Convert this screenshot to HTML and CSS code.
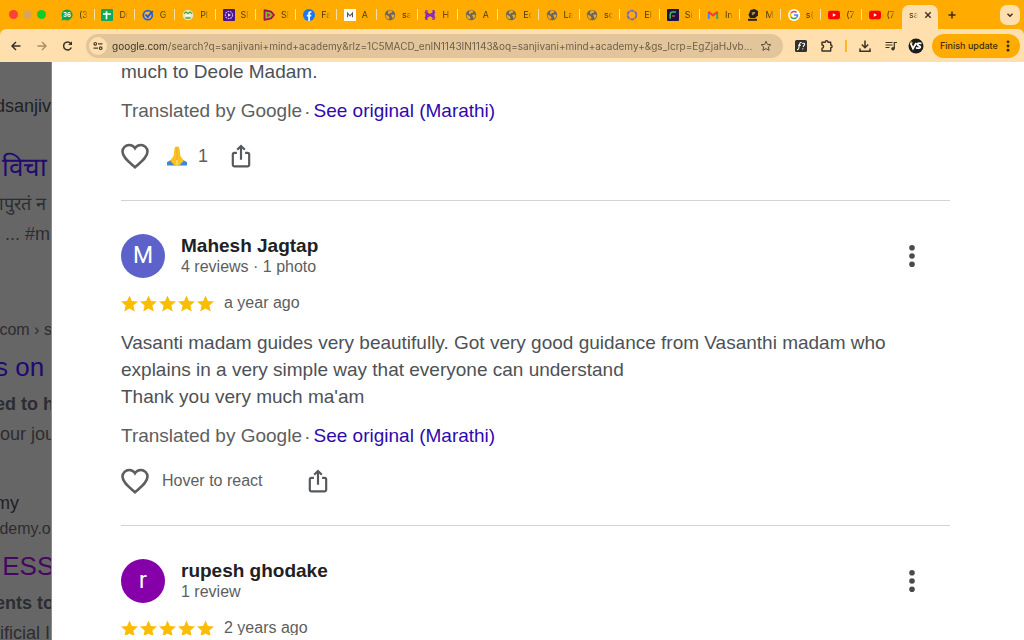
FILE: index.html
```
<!DOCTYPE html>
<html lang="en">

<head>
    <meta charset="UTF-8">
    <meta name="viewport" content="width=device-width, initial-scale=1.0">
    <title>sanjivani mind academy - Google Search</title>
    <link rel="stylesheet" href="styles.css">
</head>

<body>

    <!-- Shared icons -->
    <svg class="sprite" aria-hidden="true">
        <symbol id="globe" viewBox="0 0 12 12">
            <circle cx="6" cy="6" r="5.200" fill="#67675f" />
            <path d="M1.500 5.500l3 1.400.8 1.300v2.200C3 10.200 1.200 8.400 1.500 5.500zM4.500 1.600l2.300-.4 1.800 1-1 1.500-1.700.3-.5 1.300-1.600-.7zM7 5.800l2.600-.3.9.8c-.1 1.500-1 2.600-2.100 3.300L7.800 7.600z" fill="#f0a420" />
        </symbol>
        <symbol id="youtube" viewBox="0 0 12 12">
            <rect x="0" y="1.800" width="12" height="8.400" rx="2.200" fill="#f00" />
            <path d="M4.800 4.200v3.600L8 6z" fill="#fff" />
        </symbol>
        <symbol id="star" viewBox="2 1.500 20 20">
            <path d="M12 17.270L18.180 21l-1.640-7.030L22 9.240l-7.190-.61L12 2 9.190 8.630 2 9.240l5.460 4.730L5.820 21z" fill="#fbbc04" />
        </symbol>
        <symbol id="heart" viewBox="0 0 28 28">
            <path d="M14 25.300C8 20 1.500 15.500 1.500 9.500A6.700 6.700 0 0 1 8.200 3C10.600 3 12.800 4.200 14 6.200 15.200 4.200 17.400 3 19.800 3a6.700 6.700 0 0 1 6.700 6.500C26.500 15.500 20 20 14 25.300z" fill="none" stroke="#5e5e5e" stroke-width="2.600" />
        </symbol>
        <symbol id="share" viewBox="0 0 22 28">
            <path d="M6.500 10.500H3.800A1.800 1.800 0 0 0 2 12.300v11.400a1.800 1.800 0 0 0 1.800 1.800h14.400a1.800 1.800 0 0 0 1.800-1.800V12.300a1.800 1.800 0 0 0-1.800-1.800h-2.700M11 18V4M6.800 7.200L11 3l4.200 4.200" fill="none" stroke="#55595e" stroke-width="2.400" />
        </symbol>
        <symbol id="more" viewBox="0 0 24 24">
            <circle cx="12" cy="3.700" r="2.800" />
            <circle cx="12" cy="12" r="2.800" />
            <circle cx="12" cy="20.300" r="2.800" />
        </symbol>
    </svg>

    <header>
        <div class="tab-strip">
            <div class="window-controls">
                <span class="close"></span>
                <span class="minimize"></span>
                <span class="maximize"></span>
            </div>
            <div class="tabs">
                <button class="tab">
                    <svg viewBox="0 0 12 12"><path d="M6 .5a5.500 5.500 0 1 1-2.600 10.300L.5 11.500l.8-2.800A5.500 5.500 0 0 1 6 .5z" fill="#09a551" /><text x="6" y="8.200" font-size="6" font-weight="bold" fill="#fff" text-anchor="middle">36</text></svg>
                    <span>(3</span>
                </button>
                <button class="tab">
                    <svg viewBox="0 0 12 12"><rect width="12" height="12" rx="1" fill="#0fa958" /><path d="M2 5h8M5.500 2.200v8" stroke="#fff" stroke-width="1.600" /></svg>
                    <span>Di</span>
                </button>
                <button class="tab">
                    <svg viewBox="0 0 12 12"><circle cx="5.800" cy="6.200" r="4.500" fill="#fbb03b" stroke="#2563d9" stroke-width="1.800" /><path d="M3.500 5.500l2.200 2.300 5-5.800" fill="none" stroke="#1d56c5" stroke-width="1.800" /></svg>
                    <span>G</span>
                </button>
                <button class="tab">
                    <svg viewBox="0 0 12 12"><circle cx="6" cy="6" r="5.300" fill="#dfe9c9" /><path d="M2 4.500l2-1.500 2 1.500 2-1.500 2 1.500M3.500 9h5" fill="none" stroke="#54a33c" stroke-width="1.300" /><path d="M3.500 6.500h5" stroke="#fff" stroke-width="1.500" /></svg>
                    <span>Pl</span>
                </button>
                <button class="tab">
                    <svg viewBox="0 0 12 12"><rect width="12" height="12" rx="1" fill="#4a148c" /><circle cx="6" cy="6" r="3.600" fill="none" stroke="#c8a2f0" stroke-width="1.200" stroke-dasharray="1.800 .7" /><path d="M5 4.200v3.600L8 6z" fill="#e7d3ff" /></svg>
                    <span>Sl</span>
                </button>
                <button class="tab">
                    <svg viewBox="0 0 12 12"><path d="M1.500 1.200l6.500 1.500 3 3.300-3 3.300-6.500 1.500z" fill="#7fc321" stroke="#a01258" stroke-width="1.800" stroke-linejoin="round" /><path d="M4 3.800v4.400L8 6z" fill="#e9138b" /></svg>
                    <span>Sl</span>
                </button>
                <button class="tab">
                    <svg viewBox="0 0 12 12"><circle cx="6" cy="6" r="6" fill="#1877f2" /><path d="M5.200 12V7.500H3.800V5.700h1.400V4.500c0-1.500.8-2.300 2.200-2.300h1v1.600h-.7c-.6 0-.8.300-.8.800v1.100h1.500l-.3 1.800H6.900V12z" fill="#fff" /></svg>
                    <span>Fa</span>
                </button>
                <button class="tab">
                    <svg viewBox="0 0 12 12"><rect width="12" height="12" fill="#fff" /><path d="M3.500 8.300V4L6 7l2.500-3v4.300" fill="none" stroke="#555" stroke-width="1.100" /></svg>
                    <span>A</span>
                </button>
                <button class="tab"><svg><use href="#globe" /></svg><span>sa</span></button>
                <button class="tab">
                    <svg viewBox="0 0 12 12"><path d="M2.500 1v10M9.500 1v10M1 3l10 6M1 9l10-6" stroke="#7a28c9" stroke-width="2" /><path d="M1.500 1.500l2 2M8.500 8.500l2 2" stroke="#e63f6c" stroke-width="1.500" /></svg>
                    <span>H</span>
                </button>
                <button class="tab"><svg><use href="#globe" /></svg><span>A</span></button>
                <button class="tab"><svg><use href="#globe" /></svg><span>Ec</span></button>
                <button class="tab"><svg><use href="#globe" /></svg><span>La</span></button>
                <button class="tab"><svg><use href="#globe" /></svg><span>sc</span></button>
                <button class="tab">
                    <svg viewBox="0 0 12 12"><circle cx="6" cy="6" r="4.400" fill="none" stroke="#7566c9" stroke-width="1.900" stroke-dasharray="3.800 .8" /></svg>
                    <span>El</span>
                </button>
                <button class="tab">
                    <svg viewBox="0 0 12 12"><rect width="12" height="12" rx="1" fill="#1b1247" /><path d="M3.200 9.800V5.500c0-1.500 1-2.500 2.500-2.500H9" fill="none" stroke="#44b85c" stroke-width="1.500" /><path d="M5 7h3" stroke="#e35c3f" stroke-width="1.200" /></svg>
                    <span>Si</span>
                </button>
                <button class="tab">
                    <svg viewBox="0 0 12 12"><path d="M1.800 10V3" stroke="#4285f4" stroke-width="2" /><path d="M10.200 10V3" stroke="#34a853" stroke-width="2" /><path d="M1.400 2.800L6 6.400l4.600-3.600" fill="none" stroke="#ea4335" stroke-width="2.200" /></svg>
                    <span>In</span>
                </button>
                <button class="tab">
                    <svg viewBox="0 0 12 12"><path d="M3.500 1l4-1 3.500 2v4.500L8 9H3L1.500 6z" fill="#222" /><path d="M4.500 3.500l3-.7 1 1.200-3 2.500z" fill="#b58b52" /><path d="M1 10.800h9" stroke="#222" stroke-width="2" /></svg>
                    <span>M</span>
                </button>
                <button class="tab">
                    <svg viewBox="0 0 12 12"><circle cx="6" cy="6" r="6" fill="#fff" /><path d="M8.500 3.500A3.500 3.500 0 0 0 3 4.200" fill="none" stroke="#ea4335" stroke-width="1.600" /><path d="M3 4.200a3.500 3.500 0 0 0 0 3.600" fill="none" stroke="#fbbc04" stroke-width="1.600" /><path d="M3 7.800a3.500 3.500 0 0 0 5.500.7" fill="none" stroke="#34a853" stroke-width="1.600" /><path d="M6 6h3.500a3.500 3.500 0 0 1-1 2.500" fill="none" stroke="#4285f4" stroke-width="1.600" /></svg>
                    <span>s(</span>
                </button>
                <button class="tab"><svg><use href="#youtube" /></svg><span>(7</span></button>
                <button class="tab"><svg><use href="#youtube" /></svg><span>(7</span></button>
            </div>
            <button class="tab active">
                <span>sa</span>
                <svg viewBox="0 0 8 8"><path d="M1.300 1.300l5.400 5.400M6.700 1.300L1.300 6.700" stroke="#3c3225" stroke-width="1.400" /></svg>
            </button>
            <div class="strip-end">
                <button class="new-tab" aria-label="New tab">
                    <svg width="8" height="8" viewBox="0 0 8 8"><path d="M4 .5v7M.5 4h7" stroke="#3c2d0c" stroke-width="1.500" /></svg>
                </button>
                <button class="tab-search" aria-label="Search tabs">
                    <svg width="8" height="8" viewBox="0 0 8 8"><path d="M1.500 2.700L4 5.200l2.500-2.500" fill="none" stroke="#3c3225" stroke-width="1.500" /></svg>
                </button>
            </div>
        </div>

        <div class="toolbar">
            <div class="history">
                <button aria-label="Back"><svg width="12" height="12" viewBox="0 0 12 12"><path d="M10.500 6h-8M6 2L2 6l4 4" fill="none" stroke="#3c3225" stroke-width="1.500" /></svg></button>
                <button aria-label="Forward"><svg width="12" height="12" viewBox="0 0 12 12"><path d="M1.500 6h8M6 2l4 4-4 4" fill="none" stroke="#a98d67" stroke-width="1.400" /></svg></button>
                <button aria-label="Reload"><svg width="12" height="12" viewBox="0 0 12 12"><path d="M9.300 7.500A4 4 0 1 1 8.600 3.200" fill="none" stroke="#3c3225" stroke-width="1.500" /><path d="M10 1.200v3.900H6.100z" fill="#3c3225" /></svg></button>
            </div>
            <div class="address-bar">
                <button class="site-info" aria-label="View site information">
                    <svg width="10" height="10" viewBox="0 0 10 10" fill="none" stroke="#4a3f30" stroke-width="1.200"><circle cx="2.300" cy="2.800" r="1.300" /><path d="M5 2.800h4.500M.5 7.200H5" /><circle cx="7.700" cy="7.200" r="1.300" /></svg>
                </button>
                <input type="text" aria-label="Address" value="google.com/search?q=sanjivani+mind+academy&amp;rlz=1C5MACD_enIN1143IN1143&amp;oq=sanjivani+mind+academy+&amp;gs_lcrp=EgZjaHJvb...">
                <button aria-label="Bookmark this tab">
                    <svg width="12" height="12" viewBox="0 0 12 12"><path d="M6 1.200l1.400 3.200 3.500.3-2.600 2.300.8 3.400L6 8.600l-3.100 1.800.8-3.400-2.600-2.300 3.500-.3z" fill="none" stroke="#5c4f3d" /></svg>
                </button>
            </div>
            <div class="extensions">
                <button aria-label="Font finder">
                    <svg width="12" height="12" viewBox="0 0 12 12"><rect width="12" height="12" rx="1.500" fill="#33312d" /><path d="M2 9.500c1 .3 1.500-.2 1.800-1.500l.8-4c.3-1.300.9-1.700 2-1.400M3 5.200h3M7.200 3.500c2.600-1 3.300 1 1.300 2.500l-.4 1M7.900 8.300l-.2 1" fill="none" stroke="#fff" stroke-width="1.100" /></svg>
                </button>
                <button aria-label="Extensions">
                    <svg width="12" height="12" viewBox="0 0 12 12"><path d="M1 2.200h3.200a1.400 1.400 0 0 1 2.800 0h2.700V5a1.400 1.400 0 0 1 0 2.800V11H1V8.200a1.600 1.600 0 0 0 0-3.200z" fill="none" stroke="#3c3225" stroke-width="1.400" stroke-linejoin="round" /></svg>
                </button>
                <span class="divider"></span>
                <button aria-label="Downloads">
                    <svg width="12" height="12" viewBox="0 0 12 12"><path d="M6 .5v7M2.800 4.500L6 7.700l3.200-3.200M1 8.500v2.700h10V8.500" fill="none" stroke="#3c3225" stroke-width="1.500" /></svg>
                </button>
                <button aria-label="Media controls">
                    <svg width="12" height="12" viewBox="0 0 12 12"><path d="M.5 2.500h7M.5 5h7M.5 7.500h4M9.300 8.500V2.500H12" fill="none" stroke="#3c3225" stroke-width="1.200" /><circle cx="8" cy="8.700" r="1.700" fill="#3c3225" /></svg>
                </button>
                <button class="profile" aria-label="Profile">
                    <svg width="16" height="16" viewBox="0 0 16 16"><circle cx="8" cy="8" r="7.500" fill="#1c1c1c" /><path d="M2.500 3.500l2 2" stroke="#e0a51e" stroke-width="1.500" /><path d="M2.500 5l2.500 5.500L8.200 5M13.500 5.500c-4-1.300-5.500 1-2.500 2.300s.5 3-3 2" fill="none" stroke="#fff" stroke-width="1.800" /></svg>
                </button>
                <button class="update">Finish update
                    <svg width="12" height="12" viewBox="0 0 24 24" fill="#3c2d0c"><use href="#more" /></svg>
                </button>
            </div>
        </div>
    </header>

    <main>
        <!-- Search results, dimmed behind the reviews dialog -->
        <div class="results">
            <p class="site">dsanjiv</p>
            <h3 class="hindi"> विचा</h3>
            <p class="snippet cut">नापुरतं न</p>
            <p class="snippet">  ... #m</p>

            <p class="url first">.com › s</p>
            <h3>s on</h3>
            <p class="snippet"><b>ed to h</b></p>
            <p class="snippet"> our jou</p>

            <p class="site second">my</p>
            <p class="url"> demy.o</p>
            <h3 class="visited"> ESS</h3>
            <p class="snippet"><b>ents to</b></p>
            <p class="snippet">tificial I</p>
        </div>

        <section class="dialog">
            <div class="reviews">
                <article class="review">
                    <p class="text">much to Deole Madam.</p>
                    <p class="translated">Translated by Google<span class="dot"> · </span><a href="#">See original (Marathi)</a></p>
                    <div class="actions">
                        <button aria-label="React"><svg width="28" height="28"><use href="#heart" /></svg></button>
                        <button class="reaction">
                            <svg width="20" height="20" viewBox="0 0 20 20"><path d="M0 19.500v-3.300l4.500-2.700 5.500 6z" fill="#4285d6" /><path d="M20 19.500v-3.300l-4.500-2.700-5.500 6z" fill="#4285d6" /><path d="M9.700.5C8 .3 7.500 2 7.300 4L6.500 10l-3.300 4.700 4 4.300h2.500z" fill="#fdc21b" /><path d="M10.300.5c1.700-.2 2.200 1.500 2.400 3.500l.8 6 3.300 4.700-4 4.300h-2.500z" fill="#fdc21b" /><path d="M10 1v13" stroke="#e59a00" /></svg>
                            1
                        </button>
                        <button aria-label="Share"><svg width="20" height="26"><use href="#share" /></svg></button>
                    </div>
                </article>

                <article class="review">
                    <div class="author">
                        <span class="avatar blue">M</span>
                        <div class="author-info">
                            <h4>Mahesh Jagtap</h4>
                            <p>4 reviews · 1 photo</p>
                        </div>
                        <button class="menu" aria-label="More options"><svg width="24" height="24"><use href="#more" /></svg></button>
                    </div>
                    <div class="rating">
                        <span class="stars" role="img" aria-label="5 stars">
                            <svg><use href="#star" /></svg><svg><use href="#star" /></svg><svg><use href="#star" /></svg><svg><use href="#star" /></svg><svg><use href="#star" /></svg>
                        </span>
                        a year ago
                    </div>
                    <p class="text">Vasanti madam guides very beautifully. Got very good guidance from Vasanthi madam who explains in a very simple way that everyone can understand<br>Thank you very much ma'am</p>
                    <p class="translated">Translated by Google<span class="dot"> · </span><a href="#">See original (Marathi)</a></p>
                    <div class="actions">
                        <button class="react"><svg width="28" height="28"><use href="#heart" /></svg>Hover to react</button>
                        <button aria-label="Share"><svg width="20" height="26"><use href="#share" /></svg></button>
                    </div>
                </article>

                <article class="review">
                    <div class="author">
                        <span class="avatar purple">r</span>
                        <div class="author-info">
                            <h4>rupesh ghodake</h4>
                            <p>1 review</p>
                        </div>
                        <button class="menu" aria-label="More options"><svg width="24" height="24"><use href="#more" /></svg></button>
                    </div>
                    <div class="rating">
                        <span class="stars" role="img" aria-label="5 stars">
                            <svg><use href="#star" /></svg><svg><use href="#star" /></svg><svg><use href="#star" /></svg><svg><use href="#star" /></svg><svg><use href="#star" /></svg>
                        </span>
                        2 years ago
                    </div>
                </article>
            </div>
        </section>
    </main>

</body>

</html>
```
FILE: styles.css
```
* {
    box-sizing: border-box;
}

body {
    margin: 0;
    height: 100vh;
    display: flex;
    flex-direction: column;
    overflow: hidden;
    font-family: "Liberation Sans", Arial, sans-serif;
    background-color: #fff;
}

h3,
h4,
p {
    margin: 0;
}

button {
    display: flex;
    align-items: center;
    padding: 0;
    border: none;
    background: none;
    font-family: inherit;
    color: inherit;
    cursor: pointer;
}

svg {
    display: block;
    flex-shrink: 0;
}

.sprite {
    display: none;
}

/* Browser window */
header {
    flex-shrink: 0;
    font-family: Inter, sans-serif;
    background-color: #ffab00;
}

.tab-strip {
    display: flex;
    height: 29px;
}

.window-controls {
    display: flex;
    align-items: center;
    gap: 5px;
    width: 54px;
    padding-left: 9px;
}

.window-controls span {
    width: 9px;
    height: 9px;
    border-radius: 50%;
}

.close {
    background-color: #ff4136;
}

.minimize {
    background-color: #dca456;
}

.maximize {
    background-color: #12cc2c;
}

.tabs {
    display: flex;
    flex: 1;
    min-width: 0;
}

.tab {
    flex: 1;
    min-width: 0;
    gap: 6px;
    padding-left: 7px;
    font-size: 9px;
    color: #4f3a0c;
}

.tabs .tab::after {
    content: "";
    width: 1px;
    height: 11px;
    margin-left: auto;
    background-color: #ffe0a8;
}

.tabs .tab:last-child::after {
    background: none;
}

.tab svg {
    width: 12px;
    height: 12px;
}

.tab span {
    width: 9px;
    white-space: nowrap;
    text-align: left;
    -webkit-mask-image: linear-gradient(to right, #000 50%, transparent);
    mask-image: linear-gradient(to right, #000 50%, transparent);
}

.tab.active {
    flex: 0 0 36px;
    margin-top: 5px;
    padding-bottom: 5px;
    border-radius: 7px 7px 0 0;
    background-color: #ffdfae;
}

.tab.active svg {
    width: 8px;
    height: 8px;
}

.strip-end {
    display: flex;
    align-items: center;
    justify-content: space-between;
    width: 86px;
    padding: 0 4px 0 10px;
}

.tab-search {
    justify-content: center;
    width: 20px;
    height: 20px;
    border-radius: 7px;
    background-color: #ffdfae;
}

.toolbar {
    display: flex;
    align-items: center;
    gap: 10px;
    height: 33px;
    padding: 0 4px 0 10px;
    border-radius: 6px 6px 0 0;
    background-color: #ffdfae;
}

.history {
    display: flex;
    gap: 14px;
    width: 66px;
}

.address-bar {
    display: flex;
    align-items: center;
    flex: 1;
    min-width: 0;
    height: 24px;
    padding: 0 11px 0 3px;
    border-radius: 12px;
    background-color: #e3c59c;
}

.site-info {
    justify-content: center;
    width: 18px;
    height: 18px;
    border-radius: 50%;
    background-color: #ffdfae;
}

/* The domain reads darker than the rest of the address */
.address-bar input {
    flex: 1;
    min-width: 0;
    padding: 0 0 0 5px;
    border: none;
    outline: none;
    font-family: inherit;
    font-size: 10px;
    color: transparent;
    background: linear-gradient(to right, #3b3022 59px, #6a5a45 59px);
    -webkit-background-clip: text;
    background-clip: text;
}

.extensions {
    display: flex;
    align-items: center;
    gap: 14px;
    padding-left: 2px;
}

.divider {
    width: 2px;
    height: 12px;
    margin: 0 -2px;
    background-color: #ffb52a;
}

.profile {
    margin: 0 -6px 0 -3px;
}

.update {
    justify-content: space-between;
    width: 88px;
    height: 24px;
    padding: 0 6px 0 8px;
    border-radius: 12px;
    font-size: 9px;
    font-weight: 500;
    white-space: nowrap;
    color: #3c2d0c;
    background-color: #ffab00;
}

/* Page */
main {
    display: flex;
    flex: 1;
    min-height: 0;
}

.results {
    width: 52px;
    padding-top: 30px;
    overflow: hidden;
    color: #202124;
    background-color: #666;
    border-right: 1px solid #8a8a8a;
}

.results > * {
    margin-left: -5px;
    white-space: pre;
}

.results h3 {
    margin-top: 6px;
    margin-bottom: 3px;
    font-size: 26px;
    font-weight: normal;
    line-height: 38px;
    color: #1f0a70;
}

.results .hindi {
    margin-top: 28px;
}

.results .visited {
    color: #46085f;
}

.site {
    font-size: 18px;
    line-height: 28px;
}

.url {
    font-size: 16px;
    line-height: 24px;
    color: #2c2d30;
}

.snippet {
    font-size: 18px;
    line-height: 30px;
    color: #2c2d30;
}

.results .cut {
    margin-left: -11px;
}

.first {
    margin-top: 69px;
}

.second {
    margin-top: 40px;
}

/* Reviews dialog */
.dialog {
    flex: 1;
    min-width: 0;
    margin-bottom: 5px;
    padding: 0 74px 0 69px;
    overflow: hidden;
    color: #5e5e5e;
    background-color: #fff;
}

.reviews {
    margin-top: -4px;
}

.review {
    padding-bottom: 30px;
}

.review + .review {
    padding-top: 33px;
    border-top: 1px solid #d2d2d2;
}

.author {
    display: flex;
    align-items: center;
    margin-bottom: 13px;
}

.avatar {
    width: 44px;
    height: 44px;
    margin-right: 16px;
    border-radius: 50%;
    font-family: Roboto, sans-serif;
    font-size: 23px;
    line-height: 44px;
    text-align: center;
    color: #fff;
}

.blue {
    background-color: #5c62c9;
}

.purple {
    background-color: #8600aa;
}

.author-info {
    flex: 1;
}

.author h4 {
    font-size: 19px;
    line-height: 22px;
    color: #202124;
}

.author p {
    font-size: 16px;
    line-height: 20px;
}

.menu {
    margin-right: 26px;
    fill: #4a4a4a;
}

.rating {
    display: flex;
    align-items: center;
    gap: 10px;
    height: 24px;
    margin-bottom: 14px;
    font-size: 16px;
}

.stars {
    display: flex;
    gap: 2px;
}

.stars svg {
    width: 17px;
    height: 17px;
}

.text,
.translated {
    font-size: 19px;
    line-height: 27px;
}

.text {
    color: #4d5156;
}

.translated {
    margin-top: 12px;
}

.dot {
    font-size: 13px;
    font-weight: bold;
    line-height: 1;
}

.translated a {
    color: #2f09ad;
    text-decoration: none;
}

.actions {
    display: flex;
    margin-top: 18px;
}

.actions button {
    height: 28px;
}

.reaction {
    gap: 11px;
    margin: 0 23px 0 18px;
    font-size: 18px;
}

.react {
    gap: 13px;
    margin-right: 46px;
    font-size: 16px;
}
```
